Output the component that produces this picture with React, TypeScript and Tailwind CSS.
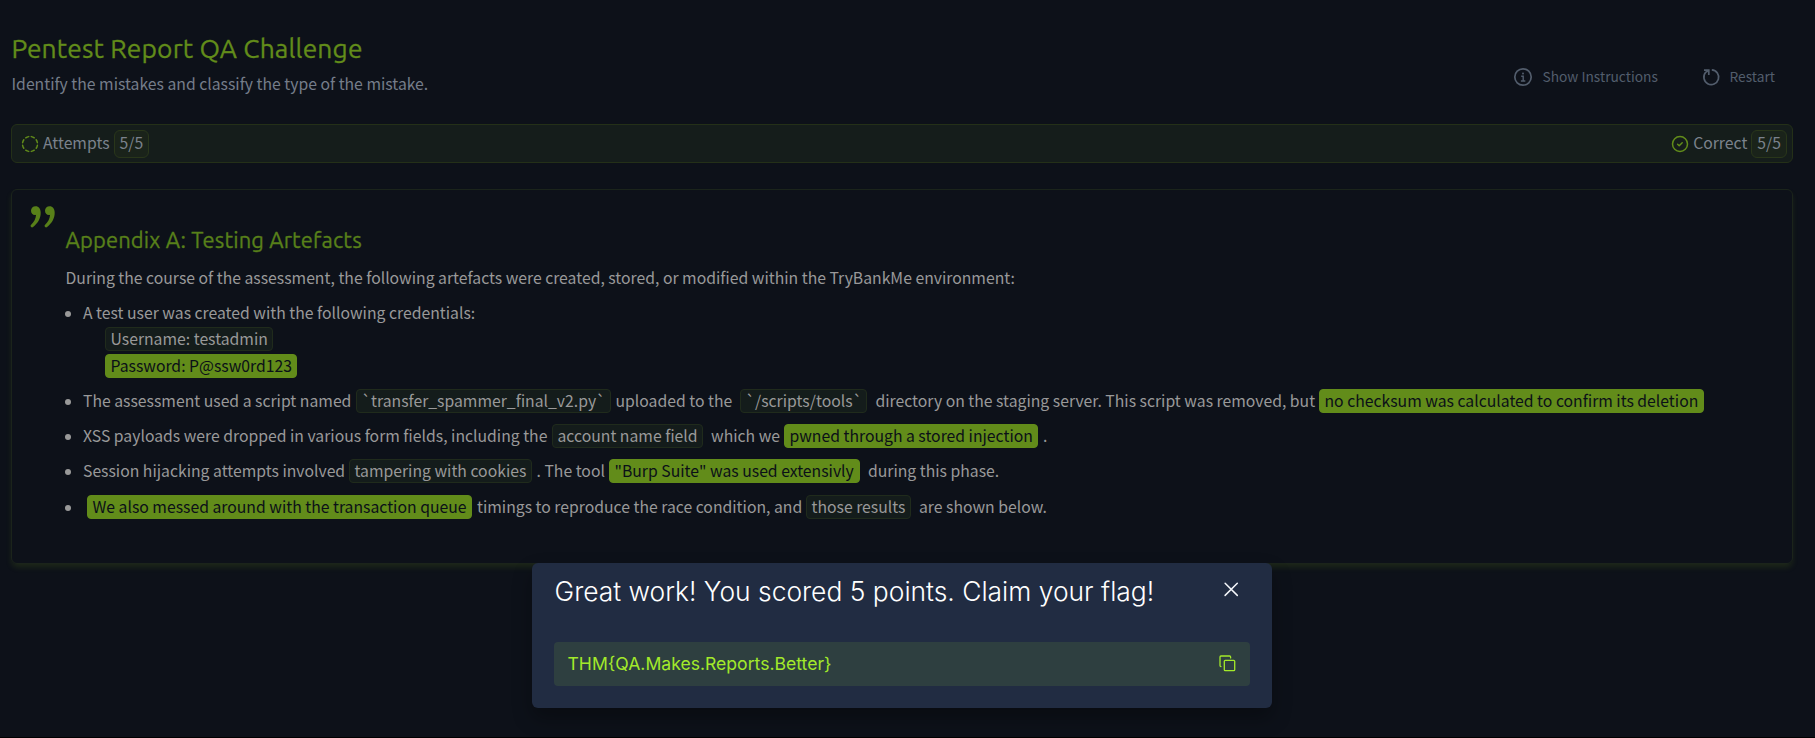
import React from "react";

type Segment = { text: string; kind?: "text" | "plain" | "found"; box: string };

const SEGMENT_STYLES = {
  text: "leading-[24px]",
  plain: "rounded-[4px] border border-[#202b1c] bg-[#141c1b] px-[4.5px] leading-[22px]",
  found: "rounded-[4px] border border-[#628c1a] bg-[#628c1a] px-[4.5px] leading-[22px] text-[#0b1018]",
};

const FINDINGS: { margin: string; segments: Segment[] }[] = [
  {
    margin: "mt-[11px]",
    segments: [
      { text: "The assessment used a script named", box: "w-[273px]" },
      { text: "`transfer_spammer_final_v2.py`", kind: "plain", box: "w-[255px]" },
      { text: "uploaded to the", box: "ml-[4.5px] w-[124.5px]" },
      { text: "`/scripts/tools`", kind: "plain", box: "w-[127px]" },
      { text: "directory on the staging server. This script was removed, but", box: "ml-[8.5px] w-[443.5px]" },
      { text: "no checksum was calculated to confirm its deletion", kind: "found", box: "w-[385px]" },
    ],
  },
  {
    margin: "mt-[11px]",
    segments: [
      { text: "XSS payloads were dropped in various form fields, including the", box: "w-[469px]" },
      { text: "account name field", kind: "plain", box: "w-[151px]" },
      { text: "which we", box: "ml-[8px] w-[73px]" },
      { text: "pwned through a stored injection", kind: "found", box: "w-[254px]" },
      { text: ".", box: "ml-[5px] w-[10px]" },
    ],
  },
  {
    margin: "mt-[11px]",
    segments: [
      { text: "Session hijacking attempts involved", box: "w-[266px]" },
      { text: "tampering with cookies", kind: "plain", box: "w-[183px]" },
      { text: ". The tool", box: "ml-[4.5px] w-[72.5px]" },
      { text: '"Burp Suite" was used extensivly', kind: "found", box: "w-[251px]" },
      { text: "during this phase.", box: "ml-[8px] w-[140px]" },
    ],
  },
  {
    margin: "mt-[12px]",
    segments: [
      { text: "We also messed around with the transaction queue", kind: "found", box: "ml-[4px] w-[385px]" },
      { text: "timings to reproduce the race condition, and", box: "ml-[5px] w-[329px]" },
      { text: "those results", kind: "plain", box: "w-[105px]" },
      { text: "are shown below.", box: "ml-[8px] w-[140px]" },
    ],
  },
];

function Chunk({ text, kind = "text", box }: Segment) {
  return <span className={`block h-6 shrink-0 whitespace-nowrap ${SEGMENT_STYLES[kind]} ${box}`}>{text}</span>;
}

function Bullet() {
  return <span className="mt-px mr-3 size-[6px] shrink-0 self-center rounded-full bg-[#999999]" />;
}

function InfoIcon() {
  return (
    <svg width="20" height="20" viewBox="0 0 20 20" fill="none" stroke="currentColor" strokeWidth="1.7">
      <circle cx="10" cy="10" r="8.2" />
      <path d="M8.2 9.3h2v4.6M7.9 14h4.4" strokeWidth="1.4" />
      <circle cx="10" cy="6.4" r="1" fill="currentColor" stroke="none" />
    </svg>
  );
}

function RestartIcon() {
  return (
    <svg width="20" height="20" viewBox="0 0 20 20" fill="none" stroke="currentColor" strokeWidth="1.7">
      <path d="M10.800 2.800a7.400 7.400 0 1 1-6.100 2.500L7.500 3.500" />
      <path d="M3 3.200h4.800v4.700" />
    </svg>
  );
}

function AttemptsIcon() {
  return (
    <svg width="18" height="18" viewBox="0 0 18 18" fill="none" stroke="#628c1a" strokeWidth="1.5" strokeLinecap="round">
      <circle cx="9" cy="9" r="7.5" pathLength="80" strokeDasharray="5.4 4.6" strokeDashoffset="-2.3" />
    </svg>
  );
}

function CorrectIcon() {
  return (
    <svg width="18" height="18" viewBox="0 0 18 18" fill="none" stroke="#628c1a" strokeWidth="1.5" strokeLinecap="round" strokeLinejoin="round">
      <circle cx="9" cy="9" r="7.5" />
      <path d="m6.600 9.200 1.600 1.500 3-2.900" />
    </svg>
  );
}

const QUOTE_MARK =
  "M5.6.3C2.9.3 1 2.2 1 4.8c0 2.4 1.7 4.2 3.9 4.2.5 0 .9-.1 1.2-.2-.3 4-2 7.3-5 10-.8.8-.5 1.6 0 2.2.6.6 1.3.6 2 0 5-4 7.6-8.8 7.6-14.200C10.700 2.800 8.700.3 5.600.3Z";

function QuoteIcon() {
  return (
    <svg width="25" height="22" viewBox="0 0 25 22" fill="#588019">
      <path d={QUOTE_MARK} />
      <path transform="translate(14 0)" d={QUOTE_MARK} />
    </svg>
  );
}

function Score({ icon, label, value }: { icon: React.ReactNode; label: string; value: string }) {
  return (
    <div className="flex items-center">
      {icon}
      <span className="ml-1 pb-[2px] leading-[22px]">{label}</span>
      <span className="ml-1 h-7 rounded-[6px] border border-[#29361a] bg-[#1a231a] px-[5px] leading-[24px]">{value}</span>
    </div>
  );
}

export default function App() {
  return (
    <main className="relative h-[738px] overflow-hidden border-b border-black bg-[#0d1119] pr-[22px] pl-[11px] font-['Noto_Sans_CJK_SC','Noto_Sans',sans-serif] text-[15.75px] text-[#999999]">
      <header className="flex h-[124px] justify-between pt-8">
        <div className="pl-[0.5px] text-[#757d8a]">
          <h1 className="font-[Ubuntu,'Noto_Sans',sans-serif] text-[26.4px] leading-8 tracking-[0.14px] text-[#628c1a] [-webkit-text-stroke:0.3px]">
            Pentest Report QA Challenge
          </h1>
          <p className="mt-[9px] leading-[22px]">Identify the mistakes and classify the type of the mistake.</p>
        </div>
        <div className="mt-[35px] mr-[18px] flex h-5 items-center text-[13.75px] leading-[18px] text-[#525d6c]">
          <button className="flex items-center gap-[9.5px]">
            <InfoIcon />
            <span className="w-[116px] pb-[2px] text-left whitespace-nowrap">Show Instructions</span>
          </button>
          <button className="ml-[42px] flex items-center gap-[9px]">
            <RestartIcon />
            <span className="w-[45.5px] pb-[2px] text-left">Restart</span>
          </button>
        </div>
      </header>

      <section className="flex h-[39px] items-center justify-between rounded-[6px] border border-[#243018] bg-[#151d1b] pr-[5px] pl-[9px] text-[#7b828c]">
        <Score icon={<AttemptsIcon />} label="Attempts" value="5/5" />
        <Score icon={<CorrectIcon />} label="Correct" value="5/5" />
      </section>

      <section className="mt-[26px] flex h-[375px] rounded-[6px] border border-[#1b241b] shadow-[0_4px_6px_-1px_rgba(98,140,26,0.2)]">
        <div className="w-[53px] shrink-0 pt-4 pl-[18px]">
          <QuoteIcon />
        </div>
        <div className="pt-9">
          <h2 className="pl-[0.5px] font-[Ubuntu,'Noto_Sans',sans-serif] text-[22px] leading-7 tracking-[0.12px] text-[#588019] [-webkit-text-stroke:0.3px]">
            Appendix A: Testing Artefacts
          </h2>
          <p className="mt-3 h-6 pl-[0.5px] leading-[24px]">
            During the course of the assessment, the following artefacts were created, stored, or modified within the TryBankMe environment:
          </p>
          <ul>
            <li className="mt-[11px]">
              <div className="flex">
                <Bullet />
                <Chunk text="A test user was created with the following credentials:" box="" />
              </div>
              <div className="mt-[2px] ml-10 flex flex-col gap-[3px]">
                <Chunk text="Username: testadmin" kind="plain" box="w-[168px]" />
                <Chunk text="Password: P@ssw0rd123" kind="found" box="w-[192px]" />
              </div>
            </li>
            {FINDINGS.map((finding) => (
              <li key={finding.segments[0].text} className={`flex ${finding.margin}`}>
                <Bullet />
                {finding.segments.map((segment) => (
                  <Chunk key={segment.text} {...segment} />
                ))}
              </li>
            ))}
          </ul>
        </div>
      </section>

      <div
        role="dialog"
        className="absolute top-[563px] left-[532px] h-[145px] w-[740px] rounded-[6px] bg-[#212c42] px-[22px] pt-3 font-[Inter,sans-serif] shadow-[0_10px_20px_rgba(0,0,0,0.3)]"
      >
        <div className="flex h-[67px] justify-between pl-[0.5px]">
          <h3 className="text-[26.42px] leading-8 font-light text-white">Great work! You scored 5 points. Claim your flag!</h3>
          <svg className="mt-[6px] mr-[11px]" width="16" height="16" viewBox="0 0 16 16" fill="none" stroke="#f4f6fa" strokeWidth="1.5" strokeLinecap="round">
            <path d="m2.100 2.200 12.200 12.200M14.300 2.200 2.100 14.400" />
          </svg>
        </div>
        <div className="flex h-11 items-center justify-between rounded-[4px] bg-[#2e3f40] pr-[14px] pl-[13.5px] text-[17.6px] text-[#a3ea2a]">
          <span>{"THM{QA.Makes.Reports.Better}"}</span>
          <svg className="mb-[2px]" width="18" height="18" viewBox="0 0 18 18" fill="none" stroke="#a3ea2a" strokeWidth="1.3" strokeLinecap="round" strokeLinejoin="round">
            <rect x="6.300" y="6.300" width="10.400" height="10.400" rx="1" />
            <path d="M3 12.600c-.6 0-1-.4-1-1V3c0-.6.4-1 1-1h8.600c.6 0 1 .4 1 1v.9" />
          </svg>
        </div>
      </div>
    </main>
  );
}
